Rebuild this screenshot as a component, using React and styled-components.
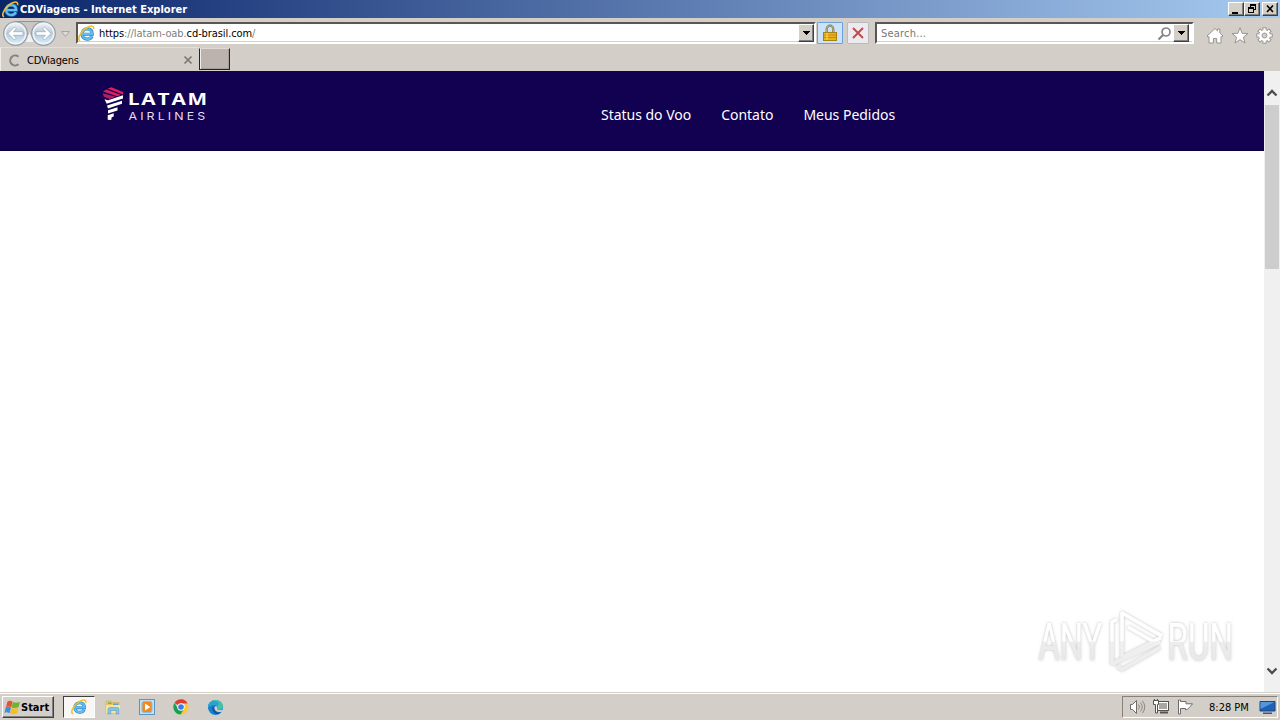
import React from 'react';
import styled, { createGlobalStyle } from 'styled-components';

const GlobalStyle = createGlobalStyle`
  * { box-sizing: border-box; }
  body {
    margin: 0;
    overflow: hidden;
    font-family: "DejaVu Sans Condensed", "DejaVu Sans", sans-serif;
    font-stretch: condensed;
    font-size: 11px;
    color: #000;
  }
  svg { display: block; flex: none; overflow: visible; }
`;

const Screen = styled.div`
  width: 1280px;
  height: 720px;
  display: flex;
  flex-direction: column;
  background: #d4d0c8;
  overflow: hidden;
`;

const Label = styled.span`
  font-weight: ${(p) => (p.$bold ? 700 : 400)};
  color: ${(p) => p.$color || '#000'};
  letter-spacing: ${(p) => p.$spacing || 'inherit'};
  margin-left: ${(p) => p.$gap || '0'};
  padding-top: ${(p) => p.$drop || '0'};
  line-height: 14px;
  white-space: pre;
`;

const TitleBar = styled.header`
  height: 18px;
  flex: none;
  display: flex;
  align-items: center;
  padding: 0 2px;
  background: linear-gradient(90deg, #0a246a, #a6caf0);
`;

const TitleButtons = styled.div`
  display: flex;
  margin-left: auto;
`;

const WinButton = styled.button`
  width: 16px;
  height: 14px;
  margin-left: ${(p) => p.$gap || '0'};
  padding: 0;
  border: 1px solid;
  border-color: #fff #404040 #404040 #fff;
  box-shadow: inset -1px -1px #808080;
  background: #d4d0c8;
`;

const NavBar = styled.div`
  height: 29px;
  flex: none;
  display: flex;
  align-items: flex-start;
  padding: 2px 0 0 2px;
  background: #d4cec8;
`;

const HistoryArrow = styled.div`
  width: 10px;
  margin-left: 3px;
`;

const Field = styled.div`
  width: ${(p) => p.$width};
  height: 22px;
  margin: 2px 0 0 ${(p) => p.$gap};
  padding-left: ${(p) => p.$pad};
  display: flex;
  align-items: center;
  background: #fff;
  border: 2px solid;
  border-color: #5a5753 #fff #fff #5a5753;
  box-shadow: inset 0 -1px #d4d0c8;
`;

const DropButton = styled.button`
  width: 16px;
  height: 18px;
  margin-left: ${(p) => p.$gap || 'auto'};
  margin-right: ${(p) => p.$right || '0'};
  padding: 0;
  border: 1px solid;
  border-color: #fff #404040 #404040 #fff;
  box-shadow: inset -1px -1px #808080;
  background: #d4d0c8;
  display: flex;
  align-items: center;
  justify-content: center;
`;

const ToolButton = styled.button`
  width: ${(p) => p.$width};
  height: 22px;
  margin: 2px 0 0 ${(p) => p.$gap};
  padding: 0;
  border: 1px solid ${(p) => (p.$active ? '#69a3df' : '#bcb8bd')};
  border-radius: 1px;
  background: ${(p) => (p.$active ? '#cce2f8' : '#eceaee')};
  display: flex;
  align-items: center;
  justify-content: center;
`;

const Tools = styled.div`
  display: flex;
  gap: 7px;
  margin: 7px 0 0 12px;
`;

const PushRight = styled.div`
  margin-left: auto;
`;

const TabRow = styled.div`
  height: 24px;
  flex: none;
  display: flex;
  background: #d4cec8;
`;

const Tab = styled.div`
  width: 199px;
  height: 24px;
  display: flex;
  align-items: center;
  padding: 1px 6px 0 7px;
  border-left: 1px solid #f0eeea;
  border-top: 1px solid #e2deda;
`;

const NewTab = styled.button`
  width: 31px;
  height: 22px;
  margin-top: 1px;
  padding: 0;
  border: 1px solid;
  border-color: #dedad5 #272524 #272524 #272524;
  box-shadow: inset 1px 0 #eee, inset -1px -1px #a49d98;
  background: #bbb3ac;
`;

const Viewport = styled.main`
  height: 621px;
  flex: none;
  display: flex;
  background: #fff;
`;

const Page = styled.div`
  flex: 1;
  display: flex;
  flex-direction: column;
`;

const SiteHeader = styled.div`
  height: 80px;
  flex: none;
  display: flex;
  align-items: flex-start;
  padding: 15px 0 0 100px;
  background: #120050;
  border-bottom: 1px solid #090040;
`;

const Menu = styled.nav`
  display: flex;
  gap: 30px;
  margin: 19px 0 0 391px;
`;

const MenuLink = styled.a`
  font-family: "Noto Sans", "Open Sans", sans-serif;
  font-stretch: normal;
  font-size: 14px;
  line-height: 20px;
  letter-spacing: -0.02px;
  color: #fff;
  white-space: nowrap;
`;

const Watermark = styled.div`
  margin: auto 20px 12px auto;
`;

const ScrollBar = styled.div`
  width: 16px;
  display: flex;
  flex-direction: column;
  align-items: center;
  justify-content: space-between;
  padding: 17px 1px 15px 0;
  background: #f0f0f0;
`;

const Thumb = styled.div`
  width: 14px;
  height: 164px;
  margin: 6px 0 auto 1px;
  background: #cdcdcd;
`;

const TaskBar = styled.footer`
  height: 28px;
  flex: none;
  display: flex;
  align-items: flex-start;
  padding: 3px 2px 0 2px;
  background: #d4cec8;
  border-top: 1px solid #d4d0c8;
  box-shadow: inset 0 1px #fff;
`;

const StartButton = styled.button`
  width: 52px;
  height: 22px;
  display: flex;
  align-items: center;
  padding: 0 1px;
  font: inherit;
  border: 1px solid;
  border-color: #fff #404040 #404040 #fff;
  box-shadow: inset -1px -1px #808080;
  background: #d4cec8;
`;

const TaskItem = styled.div`
  width: ${(p) => (p.$active ? '32px' : '34px')};
  height: 22px;
  margin-left: ${(p) => (p.$active ? '9px' : '0')};
  display: flex;
  align-items: center;
  justify-content: center;
  padding-left: ${(p) => (p.$active ? '0' : '2px')};
  border: 1px solid;
  border-color: ${(p) => (p.$active ? '#404040 #fff #fff #404040' : 'transparent')};
  background: ${(p) => (p.$active ? '#f8f7f5' : 'transparent')};
`;

const Tray = styled.div`
  width: 156px;
  height: 22px;
  margin-left: auto;
  padding: 0 1px 0 6px;
  display: flex;
  align-items: center;
  border: 1px solid;
  border-color: #85817c #fff #fff #85817c;
`;

const TrayIcons = styled.div`
  display: flex;
  gap: 7px;
  margin-right: 15px;
`;

const IeIcon = ({ size = 16 }) => (
  <svg width={size} height={size} viewBox="0 0 16 16">
    <path
      d="M13.200 10.600C12.300 12.500 10.700 13.300 8.700 13.300 5.800 13.300 3.800 11.300 3.800 8.500S5.900 3.700 8.600 3.700c2.900 0 4.800 1.900 4.800 5H5"
      fill="none" stroke="#2b80c0" strokeWidth="3"
    />
    <path
      d="M12.900 10.600C12.200 12.200 10.700 13.200 8.700 13.200 5.800 13.200 3.900 11.200 3.900 8.500S5.900 3.900 8.600 3.900c2.800 0 4.700 1.700 4.700 4.600H5"
      fill="none" stroke="#62bdf0" strokeWidth="1.900"
    />
    <path d="M2 14.900C-.8 13.800 1.500 8 6 4.200 10.500.4 15.500-.6 14.700 4" fill="none" stroke="#f0c02c" strokeWidth="1.500" />
  </svg>
);

const Arrow = ({ flip }) => (
  <g transform={flip ? 'translate(55 0) scale(-1 1)' : undefined}>
    <circle cx="13.5" cy="13.5" r="11.8" fill="#e6edf3" stroke="#8c98a4" strokeWidth="1.1" />
    <circle cx="13.5" cy="13.5" r="10" fill="url(#orb)" stroke="#f5f9fc" strokeWidth="1" />
    <path d="M6 13.500l6.500-6.500 1.800 1.800-2.800 2.900H21v3.600h-9.500l2.800 2.900-1.800 1.800z" fill="#fff" stroke="#9bb0c4" strokeWidth=".8" />
  </g>
);

const NavArrows = () => (
  <svg width="55" height="27" viewBox="0 0 55 27">
    <defs>
      <linearGradient id="orb" x1="0" y1="0" x2="0" y2="1">
        <stop offset="0" stopColor="#edf1f4" />
        <stop offset=".48" stopColor="#b9c7d5" />
        <stop offset="1" stopColor="#d4ecfb" />
      </linearGradient>
    </defs>
    <path d="M13 1.500h29L33 8q-3 4-3 6h-5q0-2-3-6z" fill="#c9c6c4" stroke="#959392" />
    <path d="M27.500 12l4 10h-8z" fill="#f1f1f1" />
    <Arrow />
    <Arrow flip />
  </svg>
);

const SmallArrow = () => (
  <svg width="8" height="4" viewBox="0 0 8 4" shapeRendering="crispEdges">
    <path d="M0 0h8L4 4z" fill="#000" />
  </svg>
);

const Latam = () => (
  <svg width="110" height="40" viewBox="0 0 110 40">
    <g fill="#dc1f62">
      <path d="M7.500 2.500L11.500 1.200 23 6v2.600z" />
      <path d="M3 5.500L6.300 3.500 21 9l-3.800 1.300z" />
      <path d="M2.500 7.300L16 10.800l-6.500 2.300-5.500-2.400z" fill="#b51c62" />
    </g>
    <g fill="#fff">
      <path d="M4.500 13.200l3.500 1L23 9.300v3.200L6.700 17.700z" />
      <path d="M7 19.500L22 14.800v3L8 22.500z" />
      <path d="M8 24.300l9.500-3v3.200L8 27.500z" />
      <path d="M7.700 29.300l6-2v3.200l-2 .7-.5 2.800-3.500-.2z" />
    </g>
    <text
      x="0" y="0" transform="translate(28.500 34) scale(1.150 1)"
      fontFamily="Inter" fontSize="10.800" letterSpacing="2.700" fill="#e4dff2" style={{ fontStretch: 'normal' }}
    >
      AIRLINES
    </text>
    <text
      x="0" y="0" transform="translate(27.800 18.900) scale(1.300 1)"
      fontFamily="Open Sans" fontWeight="700" fontSize="16" letterSpacing="1.400" fill="#fff" style={{ fontStretch: 'normal' }}
    >
      LATAM
    </text>
  </svg>
);

const AnyRun = () => (
  <svg width="210" height="76" viewBox="0 0 210 76">
    <defs>
      <linearGradient id="fade" gradientUnits="userSpaceOnUse" x1="0" y1="0" x2="0" y2="76">
        <stop offset=".48" stopColor="#fff" />
        <stop offset=".5" stopColor="#f0f0f0" />
        <stop offset="1" stopColor="#ebebeb" />
      </linearGradient>
      <linearGradient id="fadeText" gradientUnits="userSpaceOnUse" x1="0" y1="-38" x2="0" y2="0">
        <stop offset=".5" stopColor="#fff" />
        <stop offset=".54" stopColor="#ededed" />
        <stop offset="1" stopColor="#e8e8e8" />
      </linearGradient>
      <filter id="halo" x="-10%" y="-20%" width="120%" height="140%">
        <feDropShadow dx="0" dy="0" stdDeviation="1.7" floodColor="#777" floodOpacity=".5" />
      </filter>
    </defs>
    <g filter="url(#halo)" fill="url(#fadeText)" fontFamily="Roboto" fontWeight="400" fontSize="51" style={{ fontStretch: 'normal' }}>
      <text x="0" y="0" transform="translate(4.500 56) scale(.64 1)">ANY</text>
      <text x="0" y="0" transform="translate(133.500 56) scale(.65 1)">RUN</text>
    </g>
    <g filter="url(#halo)" fill="none" stroke="url(#fade)" strokeWidth="3.500" strokeLinejoin="round">
      <path d="M88 53.500V9L128 32M94 23L122 39M88 53.500L127 33.500" />
      <path d="M83 15.500l-5 2.500v41.500L88 55" />
      <path d="M79 60l47-22" />
      <path d="M83 62l5 3.500 38-22" />
    </g>
  </svg>
);

const HomeIcon = () => (
  <svg width="18" height="17" viewBox="0 0 18 17">
    <path d="M1 9l8-7.500 2.500 2.300V2h2.300v4L17 9l-1.200 1.200-.8-.7V16h-4.300v-4.500H7.400V16H3V9.500l-.8.700z" fill="#fff" stroke="#969390" />
  </svg>
);

const StarIcon = () => (
  <svg width="18" height="17" viewBox="0 0 18 17">
    <path d="M9 .8l2.100 5.500 5.900.2-4.600 3.700 1.600 5.700L9 12.700l-5 3.200 1.600-5.700L1 6.500l5.900-.2z" fill="#fff" stroke="#969390" />
  </svg>
);

const teeth = [0, 45, 90, 135, 180, 225, 270, 315];

const GearIcon = () => (
  <svg width="17" height="17" viewBox="0 0 18 18">
    {teeth.map((a) => (
      <rect key={a} x="7.300" y=".8" width="3.400" height="4" fill="#fff" stroke="#969390" transform={`rotate(${a} 9 9)`} />
    ))}
    <circle cx="9" cy="9" r="5.700" fill="#fff" />
    <circle cx="9" cy="9" r="2.600" fill="#d4cec8" stroke="#969390" />
  </svg>
);

const Chevron = ({ down }) => (
  <svg width="12" height="11" viewBox="0 0 12 11">
    <path d={down ? 'M1.500 2.500L6 7l4.500-4.500' : 'M1.500 7.500L6 3l4.500 4.500'} fill="none" stroke="#4d4d4d" strokeWidth="2.300" />
  </svg>
);

const Chrome = () => (
  <svg width="16" height="16" viewBox="0 0 16 16">
    <path d="M8 8L1.500 4A7.500 7.500 0 0 1 14.700 4.600H8z" fill="#e33b2e" />
    <path d="M8 8l6.700-3.400A7.500 7.500 0 0 1 7.600 15.500L11 9z" fill="#fcc934" />
    <path d="M8 8l3 2-3.400 5.500A7.500 7.500 0 0 1 1.500 4L5 9.500z" fill="#1e9e4f" />
    <circle cx="8" cy="8" r="3.700" fill="#fff" />
    <circle cx="8" cy="8" r="2.800" fill="#3b7be8" />
  </svg>
);

const Edge = () => (
  <svg width="17" height="17" viewBox="0 0 18 18">
    <circle cx="9" cy="9" r="8" fill="#1a7fd0" />
    <path d="M1 9C1 4 5 1 9.200 1 14 1 17 4.500 17 8c0 2.500-2 3.600-4.200 3.600-2 0-2.600-.8-2-1.800.9-2-.7-3.800-3-3.800C4.600 6 2 7.500 1 9z" fill="#43c3a0" />
    <path d="M1 9c0-4.500 3-7 7-7 2 0 4 1 4.800 2.500L11 8C10.300 6.800 9 6 7 6 4.500 6 2 7.500 1 9z" fill="#2ba0d8" />
    <path d="M7 7.500c-2.500 2-1.500 6.500 2 8 2 .8 4.500.2 6-1.500-4 1.200-7.500-.5-8-6.500z" fill="#0f559f" />
    <path d="M8 8.500c1-1.300 2.700-.8 2.800.7-.5 1.500.2 2.600 3 2.600l3-.7-1.500 2.600C11 14.500 7.500 12.500 8 8.500z" fill="#d4cec8" />
  </svg>
);

const Explorer = () => (
  <svg width="17" height="16" viewBox="0 0 17 16">
    <path d="M1 2h5l1 1.500h7V14H1z" fill="#e8c765" stroke="#ccab5c" strokeWidth=".6" />
    <rect x="3" y="3.500" width="3.500" height="1.500" fill="#62b562" />
    <rect x="8" y="4.500" width="5.500" height="1.500" fill="#56a6d6" />
    <path d="M1 6h14v8H1z" fill="#f5e3a0" />
    <path d="M3 15v-4.500Q3 8.500 5 8.500h7q2 0 2 2V15h-2.800v-3.500H5.800V15z" fill="#86c2e2" stroke="#5f9dc2" strokeWidth=".6" />
  </svg>
);

const MediaPlayer = () => (
  <svg width="16" height="16" viewBox="0 0 16 16">
    <rect x=".5" y=".5" width="15" height="15" fill="#c4e0f2" stroke="#5c94be" />
    <rect x="3" y="2.500" width="10" height="11" rx="2" fill="#f08a24" stroke="#8bbcdd" />
    <path d="M6 4.500v7L11.300 8z" fill="#fff" />
  </svg>
);

const WindowsFlag = () => (
  <svg width="17" height="17" viewBox="0 0 17 17">
    <path d="M3.500 2.500Q6 1 8.600 2.700L7.200 8.300Q4.500 6.700 2 7.900z" fill="#e8532c" />
    <path d="M9 2.900q3 1.500 7-.2L14.500 8.200Q11 9.700 7.600 8.400z" fill="#70b32e" />
    <path d="M1.800 8.300Q4.500 7.100 7 8.700L5.600 14.200Q3 12.500.5 13.700z" fill="#3b8fdc" />
    <path d="M7.400 8.900q3.500 1.400 6.900 0L13 14.400Q9.500 16 6 14.500z" fill="#f6bd24" />
  </svg>
);

const Speaker = () => (
  <svg width="17" height="16" viewBox="0 0 17 16">
    <path d="M1.500 5.500h2L7.500 1.500v13l-4-4h-2z" fill="#fff" stroke="#6e6b68" />
    <path d="M9.500 5.500q2 2.500 0 5M11.500 3.500q3.500 4.500 0 9M13.500 1.800q4.500 6.200 0 12.400" fill="none" stroke="#8d8985" />
  </svg>
);

const Network = () => (
  <svg width="17" height="16" viewBox="0 0 17 16">
    <rect x="4.500" y="2.500" width="11" height="9" fill="#aaa6a2" stroke="#55524f" />
    <rect x="5.500" y="3.500" width="9" height="7" fill="none" stroke="#fff" />
    <path d="M7 13.500h8" stroke="#55524f" strokeWidth="2" />
    <path d="M.5 1.500h5v4h-1v8.500h-2V5.500h-2z" fill="#fff" stroke="#55524f" />
    <path d="M1.500 0v2M4.500 0v2" stroke="#55524f" />
  </svg>
);

const Flag = () => (
  <svg width="17" height="16" viewBox="0 0 17 16">
    <path d="M1.500 1v14h2V9.500h5v1.300c2-.2 3.500-1.500 7-6H9V2.500H3.500V1z" fill="#fff" stroke="#6e6b68" />
  </svg>
);

const App = () => {
  return (
    <Screen>
      <GlobalStyle />
      <TitleBar>
        <IeIcon size={17} />
        <Label $bold $color="#fff" $drop="1px" $spacing="0.02px" $gap="1px">CDViagens - Internet Explorer</Label>
        <TitleButtons>
          <WinButton>
            <svg width="14" height="12"><path d="M3 9h6v2H3z" /></svg>
          </WinButton>
          <WinButton>
            <svg width="14" height="12" shapeRendering="crispEdges">
              <path d="M5 1h6v6H9V6h1V3H6v1H5zM3 4h6v6H3zM4 6v3h4V6z" fillRule="evenodd" />
            </svg>
          </WinButton>
          <WinButton $gap="2px">
            <svg width="14" height="12"><path d="M4 2.500l6 6.500M10 2.500L4 9" stroke="#000" strokeWidth="1.600" /></svg>
          </WinButton>
        </TitleButtons>
      </TitleBar>

      <NavBar>
        <NavArrows />
        <HistoryArrow>
          <svg width="10" height="27">
            <path d="M1.500 11.500h8l-4 5z" fill="#dedad7" stroke="#aaa5a1" />
          </svg>
        </HistoryArrow>
        <Field $width="740px" $gap="6px" $pad="0">
          <IeIcon size={17} />
          <Label $gap="4px" $drop="2px" $spacing="-0.09px">https<Label $color="#808080">://latam-oab.</Label>cd-brasil.com<Label $color="#808080">/</Label></Label>
          <DropButton><SmallArrow /></DropButton>
        </Field>
        <ToolButton $width="26px" $gap="1px" $active>
          <svg width="14" height="16" viewBox="0 0 14 16">
            <path d="M3.700 8V4a3.300 3.300 0 0 1 6.600 0v4" fill="none" stroke="#75714f" strokeWidth="2.200" />
            <path d="M3.700 8V4a3.300 3.300 0 0 1 6.600 0v4" fill="none" stroke="#d5cc98" strokeWidth=".8" />
            <rect x=".5" y="7.500" width="13" height="8" fill="#e9b31c" stroke="#a98019" />
            <path d="M1 10h12M1 12.500h12" stroke="#bd8d14" />
            <path d="M4 8v7" stroke="#f9df6b" />
          </svg>
        </ToolButton>
        <ToolButton $width="22px" $gap="4px">
          <svg width="12" height="12" viewBox="0 0 12 12">
            <path d="M1 1l10 10M11 1L1 11" stroke="#bf4a50" strokeWidth="1.900" />
          </svg>
        </ToolButton>
        <Field $width="319px" $gap="6px" $pad="4px">
          <Label $color="#777" $drop="2px" $spacing="0.2px">Search...</Label>
          <PushRight>
            <svg width="15" height="15" viewBox="0 0 15 15">
              <circle cx="9" cy="6" r="4" fill="none" stroke="#858585" strokeWidth="1.700" />
              <path d="M6 9l-4.500 4.500" stroke="#858585" strokeWidth="2.200" />
            </svg>
          </PushRight>
          <DropButton $gap="1px" $right="3px"><SmallArrow /></DropButton>
        </Field>
        <Tools>
          <HomeIcon />
          <StarIcon />
          <GearIcon />
        </Tools>
      </NavBar>

      <TabRow>
        <Tab>
          <svg width="13" height="13" viewBox="0 0 13 13">
            <path d="M10.500 2.700a5 5 0 1 0 0 7.600" fill="none" stroke="#85817f" strokeWidth="2" />
          </svg>
          <Label $gap="6px" $drop="1px" $spacing="-0.2px">CDViagens</Label>
          <PushRight>
            <svg width="10" height="10" viewBox="0 0 10 10">
              <path d="M1.500 1.500l7 7M8.500 1.500l-7 7" stroke="#7d7976" strokeWidth="1.700" />
            </svg>
          </PushRight>
        </Tab>
        <NewTab />
      </TabRow>

      <Viewport>
        <Page>
          <SiteHeader>
            <Latam />
            <Menu>
              <MenuLink>Status do Voo</MenuLink>
              <MenuLink>Contato</MenuLink>
              <MenuLink>Meus Pedidos</MenuLink>
            </Menu>
          </SiteHeader>
          <Watermark>
            <AnyRun />
          </Watermark>
        </Page>
        <ScrollBar>
          <Chevron />
          <Thumb />
          <Chevron down />
        </ScrollBar>
      </Viewport>

      <TaskBar>
        <StartButton>
          <WindowsFlag />
          <Label $bold $drop="1px">Start</Label>
        </StartButton>
        <TaskItem $active><IeIcon size={16} /></TaskItem>
        <TaskItem><Explorer /></TaskItem>
        <TaskItem><MediaPlayer /></TaskItem>
        <TaskItem><Chrome /></TaskItem>
        <TaskItem><Edge /></TaskItem>
        <Tray>
          <TrayIcons>
            <Speaker />
            <Network />
            <Flag />
          </TrayIcons>
          <Label $drop="1px">8:28 PM</Label>
          <PushRight>
            <svg width="17" height="15" viewBox="0 0 17 15">
              <path d="M1 1.500h15v9.500H1z" fill="#1c62b8" stroke="#204574" />
              <path d="M1.500 2h14L1.500 9z" fill="#5297dc" />
              <path d="M4 12.500h9v1.500H4z" fill="#31568a" />
            </svg>
          </PushRight>
        </Tray>
      </TaskBar>
    </Screen>
  );
};

export default App;
